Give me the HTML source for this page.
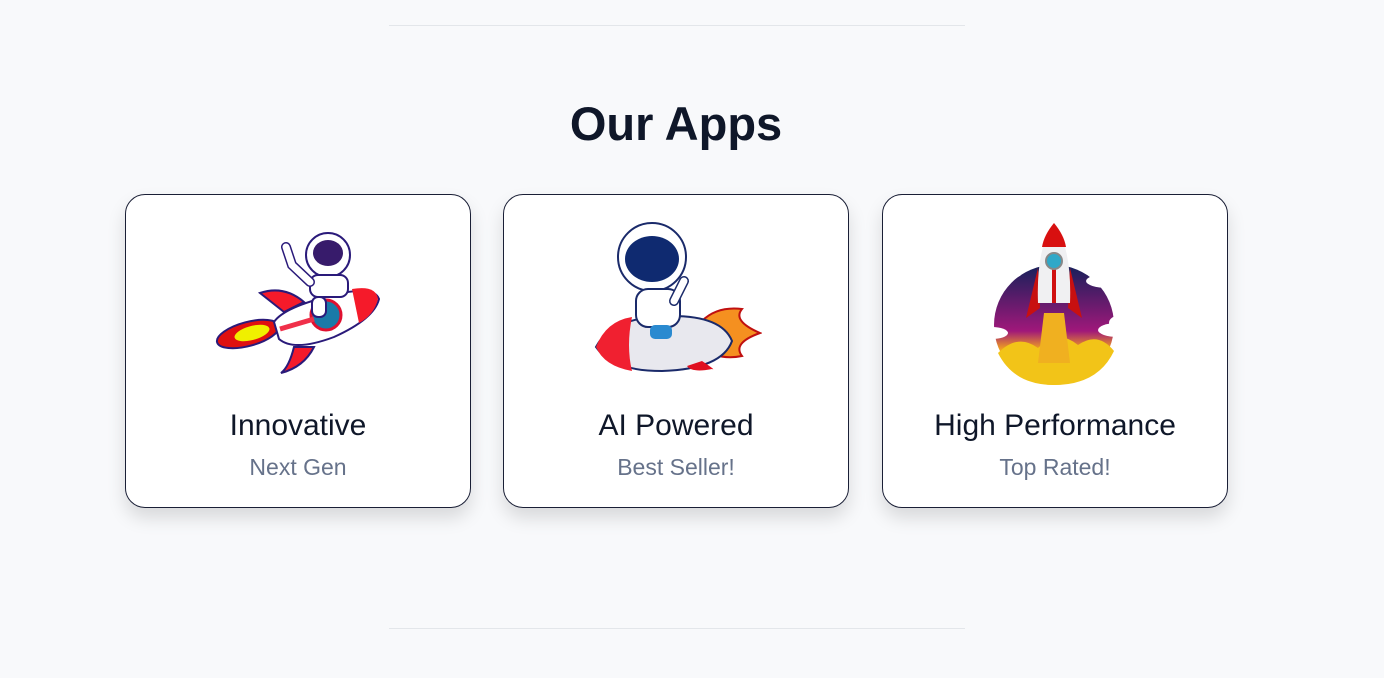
<!DOCTYPE html>
<html><head><style>
body{margin:0;background:#f8f9fb;width:1384px;height:678px;position:relative;font-family:"Liberation Sans",sans-serif;overflow:hidden}
.hr{position:absolute;left:389px;width:576px;height:1px;background:#e3e6ea}
h1{position:absolute;top:96px;left:0;width:1352px;text-align:center;margin:0;font-size:47px;font-weight:bold;color:#0f1729}
.card{position:absolute;top:194px;width:344px;height:312px;border:1px solid #1a1f36;border-radius:20px;background:#fff;box-shadow:0 10px 18px rgba(0,0,0,.13)}
.t{position:absolute;top:214px;width:100%;text-align:center;font-size:30px;color:#0f1729}
.s{position:absolute;top:259px;width:100%;text-align:center;font-size:23px;color:#66728a}
svg{position:absolute}
</style></head><body>
<div class="hr" style="top:25px"></div>
<h1>Our Apps</h1>
<div class="card" style="left:125px">
<svg style="left:88px;top:32px" width="170" height="150" viewBox="0 0 170 150">
<ellipse cx="34" cy="107" rx="32" ry="12" transform="rotate(-15 34 107)" fill="#e01010" stroke="#2a1a7a" stroke-width="2"/>
<ellipse cx="38" cy="106" rx="18" ry="7" transform="rotate(-15 38 106)" fill="#f0f000"/>
<path d="M46 66 Q70 58 90 75 L70 85Z" fill="#f51a2a" stroke="#2a1a7a" stroke-width="2"/>
<path d="M80 120 Q75 140 67 146 Q90 140 100 120Z" fill="#f51a2a" stroke="#2a1a7a" stroke-width="2"/>
<path d="M60 95 Q70 80 120 68 Q160 58 165 72 Q160 92 120 110 Q80 125 65 112Z" fill="#fff" stroke="#2a1a7a" stroke-width="2"/>
<path d="M138 62 Q162 58 164 72 Q160 88 145 96Z" fill="#f51a2a"/>
<circle cx="112" cy="88" r="15" fill="#1a7aa8" stroke="#e01030" stroke-width="3"/>
<path d="M66 102 L100 92" stroke="#f0304a" stroke-width="5"/>
<circle cx="114" cy="28" r="22" fill="#fff" stroke="#2a1a7a" stroke-width="2"/>
<ellipse cx="114" cy="26" rx="15" ry="13" fill="#371b6b"/>
<rect x="96" y="48" width="38" height="22" rx="8" fill="#fff" stroke="#2a1a7a" stroke-width="2"/>
<path d="M96 55 L78 38 L72 20" stroke="#2a1a7a" stroke-width="10" stroke-linecap="round" fill="none"/>
<path d="M96 55 L78 38 L72 20" stroke="#fff" stroke-width="7" stroke-linecap="round" fill="none"/>
<rect x="98" y="70" width="14" height="20" rx="6" fill="#fff" stroke="#2a1a7a" stroke-width="2"/>
</svg>
<div class="t">Innovative</div><div class="s">Next Gen</div></div>
<div class="card" style="left:503px">
<svg style="left:88px;top:26px" width="170" height="155" viewBox="0 0 170 155">
<path d="M110 100 Q125 85 150 88 Q140 100 168 112 Q140 122 150 135 Q125 140 110 125Z" fill="#f59020" stroke="#c01010" stroke-width="2"/>
<path d="M4 126 Q20 95 80 95 Q130 95 140 120 Q130 148 70 150 Q20 150 4 126Z" fill="#e8e8ee" stroke="#1a2a6a" stroke-width="2"/>
<path d="M4 126 Q14 100 40 96 Q34 125 40 150 Q12 145 4 126Z" fill="#f02030"/>
<path d="M110 140 Q125 150 120 148 Q100 152 95 145Z" fill="#e01020"/>
<circle cx="60" cy="36" r="34" fill="#fff" stroke="#1a2a6a" stroke-width="2"/>
<ellipse cx="60" cy="38" rx="27" ry="23" fill="#0f2a70"/>
<rect x="44" y="68" width="44" height="38" rx="12" fill="#fff" stroke="#1a2a6a" stroke-width="2"/>
<path d="M82 80 L92 60" stroke="#1a2a6a" stroke-width="10" stroke-linecap="round"/>
<path d="M82 80 L92 60" stroke="#fff" stroke-width="7" stroke-linecap="round"/>
<rect x="58" y="104" width="22" height="14" rx="5" fill="#2a8ad0"/>
</svg>
<div class="t">AI Powered</div><div class="s">Best Seller!</div></div>
<div class="card" style="left:882px">
<svg style="left:95px;top:28px" width="160" height="165" viewBox="0 0 160 165">
<defs><linearGradient id="g" x1="0" y1="0" x2="0" y2="1"><stop offset="0" stop-color="#15205a"/><stop offset=".55" stop-color="#a0187a"/><stop offset=".7" stop-color="#f0a020"/><stop offset="1" stop-color="#f0c010"/></linearGradient></defs>
<circle cx="76" cy="102" r="60" fill="url(#g)"/>
<path d="M20 130 Q40 110 60 125 Q80 105 100 122 Q120 108 136 128 Q120 162 76 162 Q36 162 20 130Z" fill="#f2c418"/>
<path d="M66 90 L86 90 L92 140 L60 140Z" fill="#f0b020"/>
<path d="M60 45 L48 95 L62 85Z M92 45 L104 95 L90 85Z" fill="#c81010"/>
<path d="M76 0 Q94 25 92 80 L60 80 Q58 25 76 0Z" fill="#f0f0f2"/>
<path d="M76 0 Q86 12 88 24 L64 24 Q66 12 76 0Z" fill="#d81010"/>
<path d="M74 30 L78 30 L78 80 L74 80Z" fill="#d01010"/>
<circle cx="76" cy="38" r="8" fill="#30a8c8" stroke="#888" stroke-width="2"/>
<ellipse cx="22" cy="50" rx="22" ry="7" fill="#fff"/><ellipse cx="28" cy="45" rx="10" ry="7" fill="#fff"/>
<ellipse cx="130" cy="58" rx="22" ry="7" fill="#fff"/><ellipse cx="126" cy="53" rx="8" ry="6" fill="#fff"/>
<ellipse cx="14" cy="110" rx="16" ry="6" fill="#fff"/><ellipse cx="140" cy="107" rx="20" ry="7" fill="#fff"/><ellipse cx="140" cy="100" rx="9" ry="7" fill="#fff"/>
</svg>
<div class="t">High Performance</div><div class="s">Top Rated!</div></div>
<div class="hr" style="top:628px"></div>
</body></html>
